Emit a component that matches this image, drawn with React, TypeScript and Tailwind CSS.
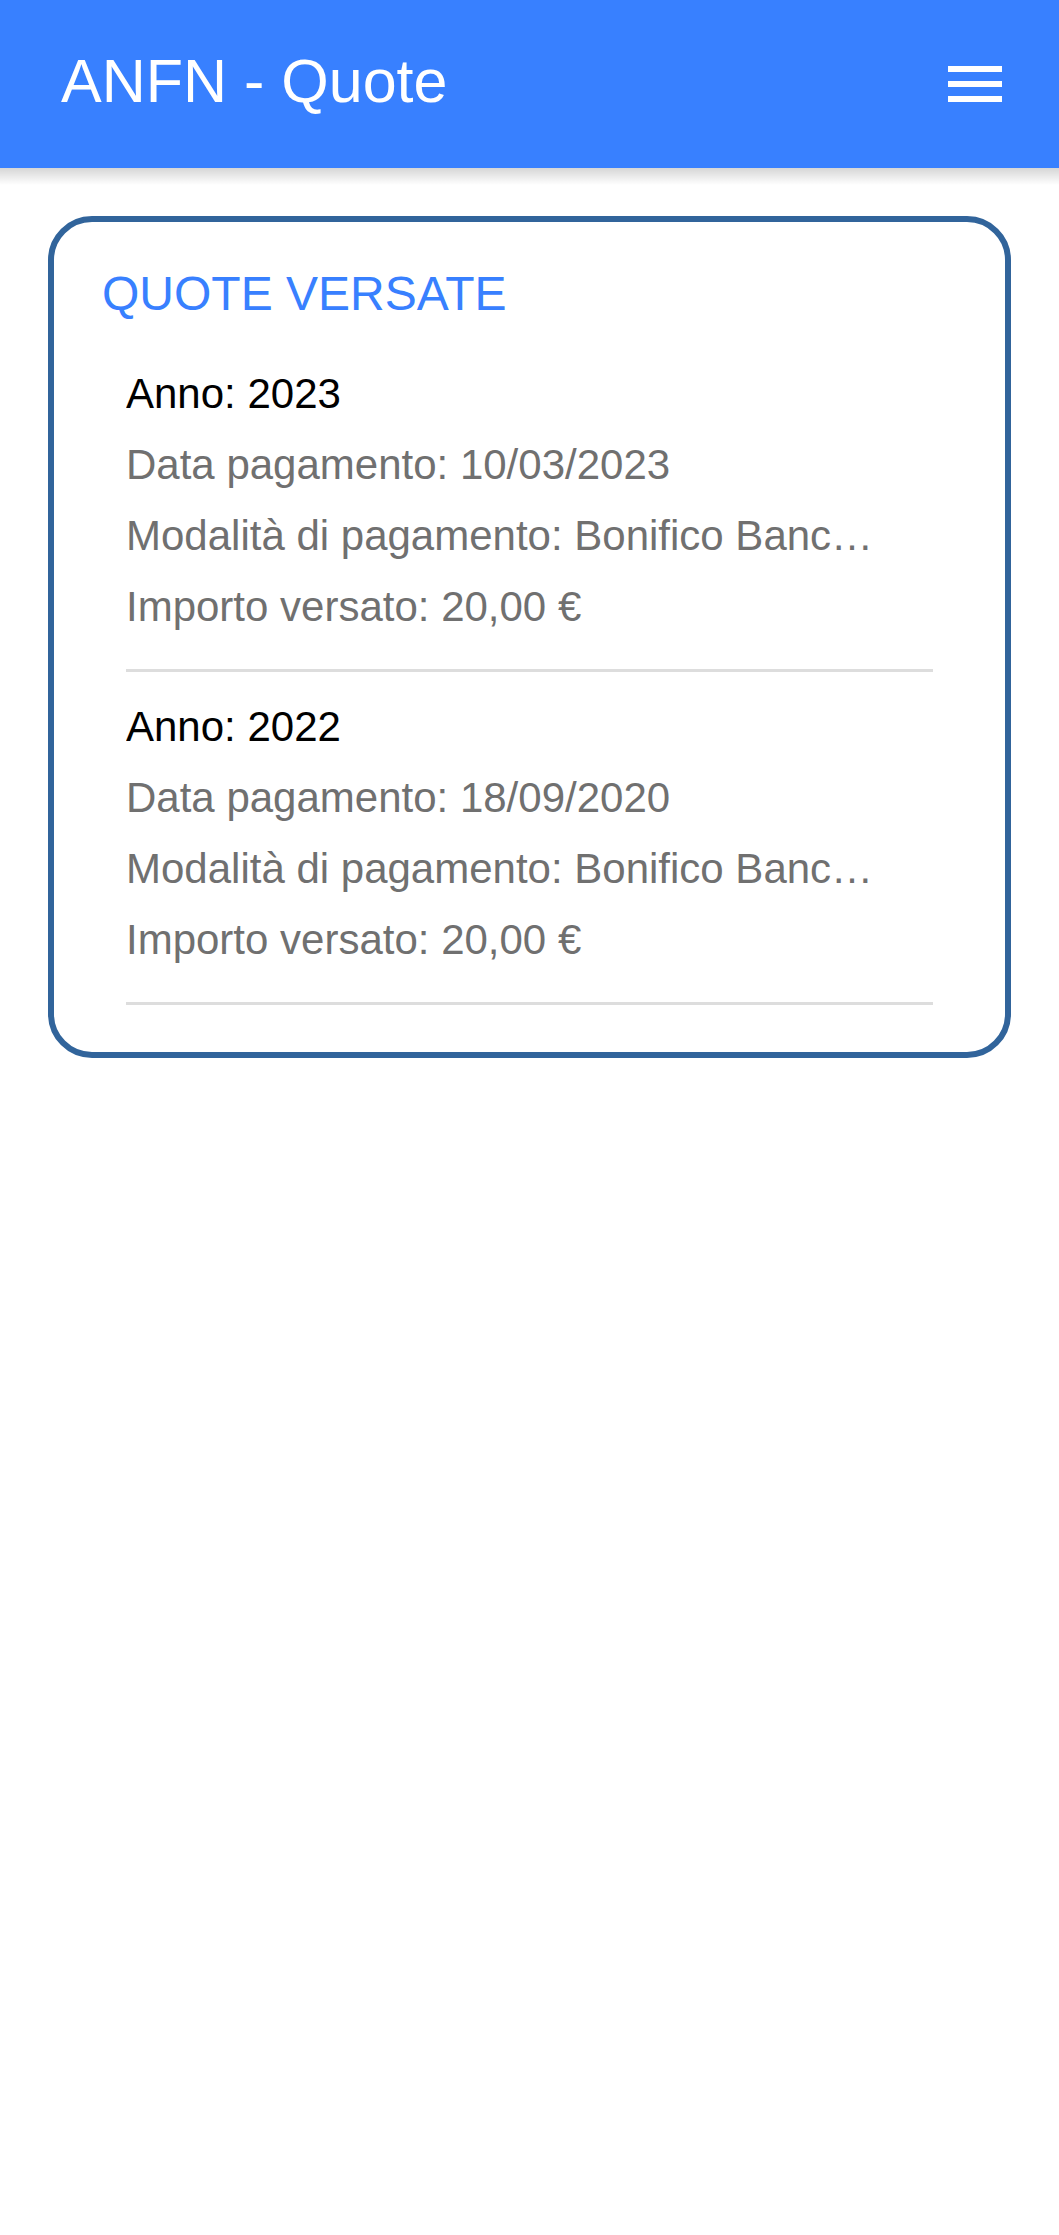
import React from "react";

const quote = [
  { anno: "2023", data: "10/03/2023", modalita: "Bonifico Bancario", importo: "20,00 €" },
  { anno: "2022", data: "18/09/2020", modalita: "Bonifico Bancario", importo: "20,00 €" },
];

export default function App() {
  return (
    <div className="min-h-[2235px] bg-white" style={{ fontFamily: '"Liberation Sans", Arial, sans-serif' }}>
      <header className="relative flex h-[168px] items-center justify-between bg-[#3880ff] pb-[6px] pl-[61px] pr-[57px]">
        <h1 className="text-[61px] font-normal leading-none text-white">ANFN - Quote</h1>
        <div className="mt-[6px] flex w-[54px] flex-col gap-[9px]">
          <span className="block h-[6px] w-full bg-white" />
          <span className="block h-[6px] w-full bg-white" />
          <span className="block h-[6px] w-full bg-white" />
        </div>
        <div className="absolute left-0 right-0 top-full h-[17px] bg-gradient-to-b from-[rgba(0,0,0,0.16)] to-transparent" />
      </header>

      <main className="px-[48px] pt-[48px]">
        <section className="rounded-[44px] border-[6px] border-[#31649b] px-[48px] pb-[47px] pt-[48px]">
          <h2 className="text-[48px] font-normal leading-none text-[#3880ff]">QUOTE VERSATE</h2>
          <ul className="mt-[40px] px-[24px]">
            {quote.map((q, i) => (
              <li key={q.anno} className={i > 0 ? "mt-[19px]" : ""}>
                <div className="pr-[48px] text-[42px] leading-[71px]">
                  <p className="truncate text-black">Anno: {q.anno}</p>
                  <p className="truncate text-[#707070]">Data pagamento: {q.data}</p>
                  <p className="truncate text-[#707070]">Modalità di pagamento: {q.modalita}</p>
                  <p className="truncate text-[#707070]">Importo versato: {q.importo}</p>
                </div>
                <div className="mt-[27px] h-[3px] bg-[#dddddd]" />
              </li>
            ))}
          </ul>
        </section>
      </main>
    </div>
  );
}
